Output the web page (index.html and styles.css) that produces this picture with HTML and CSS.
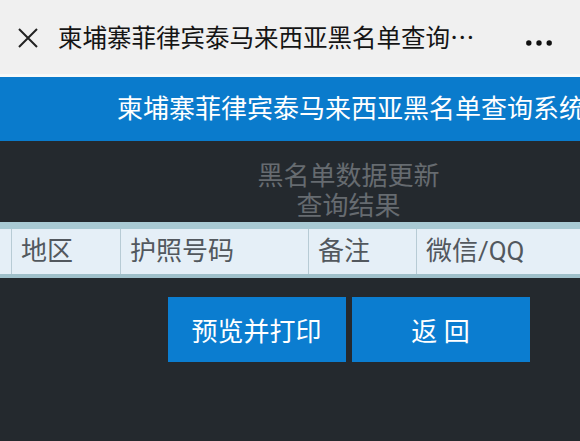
FILE: index.html
```html
<!DOCTYPE html>
<html lang="zh-CN">
<head>
<meta charset="utf-8">
<title>柬埔寨菲律宾泰马来西亚黑名单查询系统</title>
<link rel="stylesheet" href="styles.css">
</head>
<body>
<header class="navbar">
  <svg class="icon-close" width="20" height="20" viewBox="0 0 20 20" aria-hidden="true">
    <path d="M1 1 L19 19 M19 1 L1 19" stroke="#222" stroke-width="2" fill="none"/>
  </svg>
  <div class="nav-title">柬埔寨菲律宾泰马来西亚黑名单查询系统</div>
  <svg class="icon-more" width="26" height="6" viewBox="0 0 26 6" aria-hidden="true">
    <circle cx="2.8" cy="3" r="2.7" fill="#111"/>
    <circle cx="13" cy="3" r="2.7" fill="#111"/>
    <circle cx="23.2" cy="3" r="2.7" fill="#111"/>
  </svg>
</header>
<div class="banner">柬埔寨菲律宾泰马来西亚黑名单查询系统</div>
<main class="content">
  <div class="heading">
    <div>黑名单数据更新</div>
    <div>查询结果</div>
  </div>
  <div class="table">
    <div class="row head">
      <div class="cell"></div>
      <div class="cell">地区</div>
      <div class="cell">护照号码</div>
      <div class="cell">备注</div>
      <div class="cell">微信/QQ</div>
    </div>
  </div>
  <div class="actions">
    <button class="btn">预览并打印</button>
    <button class="btn">返 回</button>
  </div>
</main>
</body>
</html>
```
FILE: styles.css
```css
html, body {
  margin: 0;
  padding: 0;
}
body {
  width: 580px;
  height: 441px;
  overflow: hidden;
  background: #24292e;
  font-family: Roboto, "Noto Sans CJK SC", sans-serif;
}
.navbar {
  height: 74px;
  background: #f0f0f0;
  border-bottom: 3px solid #f7f9f9;
  display: flex;
  align-items: center;
  padding-left: 18px;
  box-sizing: content-box;
}
.icon-close {
  flex: none;
  margin-top: 1px;
}
.nav-title {
  margin-left: 20px;
  width: 430px;
  font-family: "Noto Sans CJK SC", sans-serif;
  font-size: 24.5px;
  color: #151515;
  white-space: nowrap;
  overflow: hidden;
  text-overflow: ellipsis;
  line-height: 30px;
}
.icon-more {
  flex: none;
  margin-left: 38px;
  margin-top: 12px;
}
.banner {
  height: 64px;
  background: #0a7bcc;
  color: #ffffff;
  font-size: 26px;
  line-height: 64px;
  padding-left: 117px;
  white-space: nowrap;
  overflow: hidden;
}
.content {
  display: flex;
  flex-direction: column;
}
.heading {
  padding-top: 20px;
  padding-left: 117px;
  text-align: center;
  font-size: 26px;
  line-height: 30px;
  color: #666b70;
}
.table {
  margin-top: 1px;
  border-top: 7px solid #a9cad4;
  border-bottom: 4px solid #9fc0ca;
  background: #e5eff7;
}
.row {
  display: grid;
  grid-template-columns: 12px 109px 188px 108px 1fr;
  height: 45px;
}
.cell {
  border-right: 1px solid #b7cbd5;
  padding-left: 9px;
  font-size: 26px;
  line-height: 45px;
  color: #52585e;
  white-space: nowrap;
  overflow: hidden;
}
.cell:first-child {
  padding-left: 0;
}
.cell:last-child {
  border-right: none;
}
.actions {
  display: flex;
  justify-content: center;
  gap: 6px;
  padding-left: 117px;
  margin-top: 19px;
}
.btn {
  width: 178px;
  height: 65px;
  border: none;
  background: #0b7dd0;
  color: #ffffff;
  font-family: Roboto, "Noto Sans CJK SC", sans-serif;
  font-size: 26px;
  padding: 0;
}
```
